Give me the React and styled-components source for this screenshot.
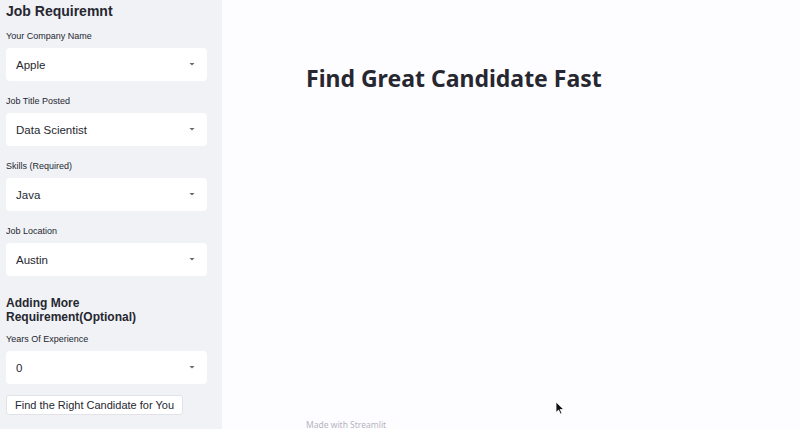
import React from "react";
import styled, { createGlobalStyle } from "styled-components";

const GlobalStyle = createGlobalStyle`
  html, body { margin: 0; padding: 0; }
  body {
    font-family: "Liberation Sans", Arial, sans-serif;
    color: #262730;
    background: #fcfcfd;
  }
`;

const fields = [
  { label: "Your Company Name", value: "Apple" },
  { label: "Job Title Posted", value: "Data Scientist" },
  { label: "Skills (Required)", value: "Java" },
  { label: "Job Location", value: "Austin" },
];

function Caret() {
  return (
    <svg width="8" height="5" viewBox="0 0 8 5">
      <path d="M1.5 1h5L4 3.6z" fill="#666" />
    </svg>
  );
}

function SelectField({ label, value }) {
  return (
    <SField>
      <SLabel>{label}</SLabel>
      <SSelect>
        <span>{value}</span>
        <Caret />
      </SSelect>
    </SField>
  );
}

export default function App() {
  return (
    <>
      <GlobalStyle />
      <SPage>
        <SSidebar>
          <SSideTitle>Job Requiremnt</SSideTitle>
          {fields.map((f) => (
            <SelectField key={f.label} {...f} />
          ))}
          <SSubTitle>
            Adding More
            <br />
            Requirement(Optional)
          </SSubTitle>
          <SelectField label="Years Of Experience" value="0" />
          <SButton>Find the Right Candidate for You</SButton>
        </SSidebar>
        <SMain>
          <SMainTitle>Find Great Candidate Fast</SMainTitle>
          <SFooter>Made with Streamlit</SFooter>
          <SCursor width="10" height="14" viewBox="0 0 10 14">
            <path d="M1 1v10.5l2.6-2.4 1.8 4 1.6-.7-1.8-3.9H8.8z" fill="#111" stroke="#fff" strokeWidth="0.8" />
          </SCursor>
        </SMain>
      </SPage>
    </>
  );
}

const SPage = styled.div`
  display: flex;
  width: 800px;
  height: 429px;
  overflow: hidden;
`;

const SSidebar = styled.aside`
  width: 222px;
  flex-shrink: 0;
  background: #f0f2f6;
  padding: 2px 15px 0 6px;
  box-sizing: border-box;
  display: flex;
  flex-direction: column;
`;

const SSideTitle = styled.h2`
  margin: 0 0 10px;
  font-size: 14px;
  font-weight: 700;
  line-height: 18px;
`;

const SField = styled.div`
  display: flex;
  flex-direction: column;
  margin-bottom: 14px;
`;

const SLabel = styled.label`
  font-size: 9px;
  line-height: 13px;
  margin-bottom: 5px;
  color: #262730;
`;

const SSelect = styled.div`
  height: 33px;
  background: #fff;
  border-radius: 4px;
  display: flex;
  align-items: center;
  justify-content: space-between;
  padding: 0 11px 0 10px;
  font-size: 11.5px;
  color: #262730;
`;

const SSubTitle = styled.h3`
  margin: 6px 0 9px;
  font-size: 12px;
  font-weight: 700;
  line-height: 14px;
`;

const SButton = styled.button`
  align-self: flex-start;
  height: 20px;
  margin-top: -3px;
  padding: 0 8px;
  background: #fff;
  border: 1px solid #e2e3e8;
  border-radius: 3px;
  font-family: "Liberation Sans", Arial, sans-serif;
  font-size: 11px;
  color: #262730;
`;

const SMain = styled.main`
  flex: 1;
  position: relative;
  background: #fdfcfe;
  padding: 63px 0 0 84px;
  display: flex;
  flex-direction: column;
`;

const SMainTitle = styled.h1`
  margin: 0;
  font-family: "Noto Sans", "Liberation Sans", sans-serif;
  font-size: 23px;
  font-weight: 700;
  line-height: 30px;
  color: #262730;
`;

const SFooter = styled.div`
  margin-top: auto;
  margin-bottom: -2px;
  font-family: "Noto Sans", "Liberation Sans", sans-serif;
  font-size: 8.5px;
  color: #b5b5be;
  line-height: 12px;
`;

const SCursor = styled.svg`
  position: absolute;
  left: 333px;
  top: 401px;
`;
